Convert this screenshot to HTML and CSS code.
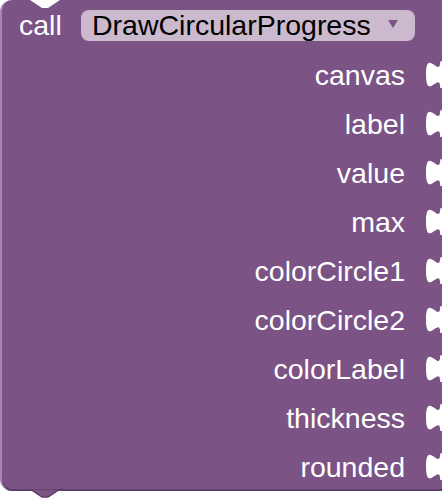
FILE: index.html
```html
<!DOCTYPE html>
<html>
<head>
<meta charset="utf-8">
<link rel="stylesheet" href="styles.css">
</head>
<body>
<div class="block">
  <svg class="notch-top" width="30" height="8" viewBox="0 0 30 8"><polygon points="0,0 12,8 18,8 30,0" fill="#ffffff"/></svg>
  <div class="header">
    <span class="kw">call</span>
    <div class="dropdown">
      <span class="dd-text">DrawCircularProgress</span>
      <svg class="dd-arrow" width="10" height="8" viewBox="0 0 10 8"><polygon points="0,0 10,0 5,8" fill="#7c5385"/></svg>
    </div>
  </div>
  <div class="inputs">
    <div class="row"><span class="lbl">canvas</span><svg class="tab" width="16" height="28" viewBox="0 0 9 15.5"><path d="M8,0 c0,10 -8,-8 -8,7.5 s8,-2.5 8,7.5 H9 V0 Z" fill="#ffffff"/></svg></div>
    <div class="row"><span class="lbl">label</span><svg class="tab" width="16" height="28" viewBox="0 0 9 15.5"><path d="M8,0 c0,10 -8,-8 -8,7.5 s8,-2.5 8,7.5 H9 V0 Z" fill="#ffffff"/></svg></div>
    <div class="row"><span class="lbl">value</span><svg class="tab" width="16" height="28" viewBox="0 0 9 15.5"><path d="M8,0 c0,10 -8,-8 -8,7.5 s8,-2.5 8,7.5 H9 V0 Z" fill="#ffffff"/></svg></div>
    <div class="row"><span class="lbl">max</span><svg class="tab" width="16" height="28" viewBox="0 0 9 15.5"><path d="M8,0 c0,10 -8,-8 -8,7.5 s8,-2.5 8,7.5 H9 V0 Z" fill="#ffffff"/></svg></div>
    <div class="row"><span class="lbl">colorCircle1</span><svg class="tab" width="16" height="28" viewBox="0 0 9 15.5"><path d="M8,0 c0,10 -8,-8 -8,7.5 s8,-2.5 8,7.5 H9 V0 Z" fill="#ffffff"/></svg></div>
    <div class="row"><span class="lbl">colorCircle2</span><svg class="tab" width="16" height="28" viewBox="0 0 9 15.5"><path d="M8,0 c0,10 -8,-8 -8,7.5 s8,-2.5 8,7.5 H9 V0 Z" fill="#ffffff"/></svg></div>
    <div class="row"><span class="lbl">colorLabel</span><svg class="tab" width="16" height="28" viewBox="0 0 9 15.5"><path d="M8,0 c0,10 -8,-8 -8,7.5 s8,-2.5 8,7.5 H9 V0 Z" fill="#ffffff"/></svg></div>
    <div class="row"><span class="lbl">thickness</span><svg class="tab" width="16" height="28" viewBox="0 0 9 15.5"><path d="M8,0 c0,10 -8,-8 -8,7.5 s8,-2.5 8,7.5 H9 V0 Z" fill="#ffffff"/></svg></div>
    <div class="row"><span class="lbl">rounded</span><svg class="tab" width="16" height="28" viewBox="0 0 9 15.5"><path d="M8,0 c0,10 -8,-8 -8,7.5 s8,-2.5 8,7.5 H9 V0 Z" fill="#ffffff"/></svg></div>
  </div>
  <svg class="tab-bottom" width="32" height="9" viewBox="0 0 32 9"><polygon points="1,0 13,8 19,8 31,0" fill="#7c5385" stroke="#5e3f67" stroke-width="1.5"/><rect x="0" y="-2" width="32" height="2" fill="#7c5385"/></svg>
</div>
</body>
</html>
```
FILE: styles.css
```css
html, body {
  margin: 0;
  padding: 0;
  background: #ffffff;
}
body {
  width: 442px;
  height: 500px;
  overflow: hidden;
  font-family: "Liberation Sans", Arial, sans-serif;
}
.block {
  position: relative;
  width: 442px;
  height: 491px;
  box-sizing: border-box;
  background: #7c5385;
  border-radius: 12px 0 0 12px;
  border-left: 2px solid #a386ad;
  box-shadow: inset 0 -2px 0 #5e3f67;
}
.notch-top {
  position: absolute;
  top: 0;
  left: 28px;
  display: block;
}
.tab-bottom {
  position: absolute;
  top: 489px;
  left: 27px;
  display: block;
  overflow: visible;
}
.header {
  display: flex;
  align-items: center;
  height: 50px;
  box-sizing: border-box;
  padding: 10px 0 9px 17px;
}
.kw {
  color: #ffffff;
  font-size: 28.5px;
  line-height: 31px;
  width: 62px;
}
.dropdown {
  display: flex;
  align-items: center;
  justify-content: space-between;
  width: 334px;
  height: 31px;
  box-sizing: border-box;
  background: #cbbace;
  border-radius: 8px;
  padding: 0 17px 0 11px;
}
.dd-text {
  color: #000000;
  font-size: 28.5px;
  line-height: 31px;
}
.dd-arrow {
  display: block;
  margin-top: -4px;
}
.inputs {
  display: flex;
  flex-direction: column;
}
.row {
  display: flex;
  align-items: center;
  justify-content: flex-end;
  height: 49px;
}
.lbl {
  color: #ffffff;
  font-size: 28.5px;
  line-height: 30px;
  margin-right: 21px;
}
.tab {
  display: block;
}
```
